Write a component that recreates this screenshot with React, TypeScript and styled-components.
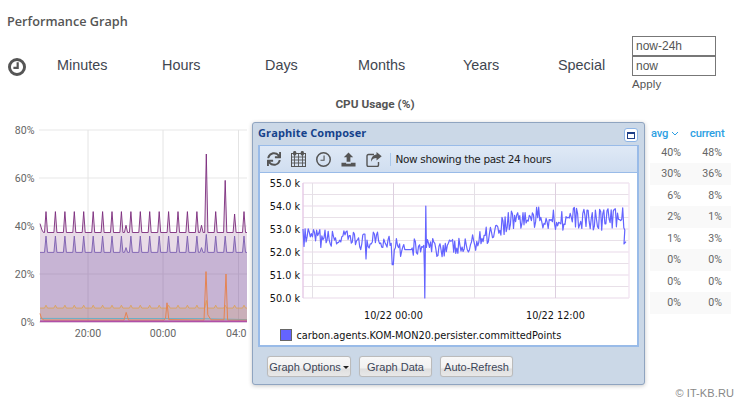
import React from "react";
import styled, { createGlobalStyle } from "styled-components";
import { FaSync } from "react-icons/fa";

const Global = createGlobalStyle`
  html, body { margin: 0; padding: 0; background: #fff; }
  body { width: 739px; height: 400px; overflow: hidden; font-family: "Liberation Sans", Arial, sans-serif; }
`;

const Page = styled.div`
  position: relative;
  width: 739px;
  height: 400px;
  overflow: hidden;
  padding: 13px 0 0 7px;
  box-sizing: border-box;
`;
const Title = styled.h2`
  margin: 0;
  font: 600 12.7px/17px "Open Sans", sans-serif;
  color: #555;
`;
const RangeBar = styled.div`
  display: flex;
  align-items: center;
  height: 57px;
  margin-top: 6px;
`;
const ClockSlot = styled.div`
  width: 50px;
  padding-top: 4px;
  display: flex;
  padding-left: 1px;
  box-sizing: border-box;
`;
const Tab = styled.div<{ $w: number }>`
  width: ${(p) => p.$w}px;
  font: 14.4px/20px "Liberation Sans", sans-serif;
  color: #3f4650;
`;
const RangeForm = styled.div`
  display: flex;
  flex-direction: column;
  align-self: flex-start;
  width: 84px;
`;
const RangeInput = styled.div`
  height: 18px;
  border: 1px solid #777;
  padding-left: 3px;
  font: 12px/18px "Liberation Sans", sans-serif;
  color: #555;
`;
const ApplyLabel = styled.div`
  font: 11.5px/14px "Liberation Sans", sans-serif;
  letter-spacing: 0.1px;
  color: #555;
  margin-top: 1px;
`;
const ChartTitle = styled.div`
  width: 739px;
  margin: 4px 0 0 -7px;
  padding-left: 11px;
  box-sizing: border-box;
  text-align: center;
  font: 700 11.8px/15px "Roboto", sans-serif;
  color: #555;
`;
const ChartRow = styled.div`
  display: flex;
  margin: 8px 0 0 -7px;
`;
const LegendTable = styled.div`
  margin: 5px 0 0 401px;
  width: 81px;
  flex: none;
`;
const LegendHead = styled.div`
  display: flex;
  height: 17px;
  font: 500 11.2px/17px "Roboto", sans-serif;
  letter-spacing: -0.2px;
  color: #2d9fe3;
  padding-left: 1px;
`;
const HeadAvg = styled.div`
  width: 39px;
  display: flex;
  align-items: center;
  gap: 3px;
`;
const LegendRow = styled.div<{ $alt: boolean }>`
  display: grid;
  grid-template-columns: 31px 41px;
  height: 21.45px;
  background: ${(p) => (p.$alt ? "#f9f9f9" : "#fff")};
  font: 10.6px/21px "Roboto", sans-serif;
  color: #666;
  text-align: right;
`;

const Win = styled.div`
  position: absolute;
  left: 252px;
  top: 122px;
  width: 393px;
  height: 263px;
  box-sizing: border-box;
  background: #cbd8e7;
  border: 1px solid #8fa4c0;
  border-radius: 3px;
  box-shadow: 0 1px 4px rgba(0, 0, 0, 0.22);
  padding: 0 5px;
`;
const WinHead = styled.div`
  display: flex;
  align-items: center;
  justify-content: space-between;
  height: 22px;
`;
const WinTitle = styled.div`
  font: 700 11px/14px "Open Sans", sans-serif;
  color: #15428b;
  letter-spacing: 0.1px;
  margin-bottom: 2px;
`;
const MaxBtn = styled.div`
  width: 12px;
  height: 12px;
  margin: 2px 1px 0 0;
  background: #fff;
  border: 1px solid #8eb5e6;
  border-radius: 3px;
  display: flex;
  align-items: center;
  justify-content: center;
  &::before {
    content: "";
    width: 6px;
    height: 4px;
    border: 1px solid #1f3f87;
    border-top-width: 2px;
  }
`;
const Body = styled.div`
  border: 1px solid #99bbe8;
  border-width: 1px 2px 2px;
`;
const Toolbar = styled.div`
  display: flex;
  align-items: center;
  height: 26px;
  padding-left: 5.5px;
  background: linear-gradient(#dfe9f6, #d0def0);
  border-bottom: 1px solid #99bbe8;
`;
const IconGroup = styled.div`
  display: flex;
  align-items: center;
  gap: 9px;
`;
const IconSlot = styled.div`
  display: flex;
  width: 16px;
  justify-content: center;
  color: #555;
`;
const Sep = styled.div`
  width: 1px;
  height: 13px;
  margin-left: 8px;
  background: #aac8ea;
`;
const ToolText = styled.div`
  margin-left: 5px;
  font: 10.5px/14px "DejaVu Sans", sans-serif;
  color: #222;
  letter-spacing: -0.35px;
`;
const GraphBox = styled.div`
  background: #fff;
  height: 172px;
`;
const BtnRow = styled.div`
  display: flex;
  gap: 8px;
  padding: 9px 0 0 9px;
`;
const Btn = styled.div<{ $w: number }>`
  width: ${(p) => p.$w}px;
  height: 21px;
  box-sizing: border-box;
  border: 1px solid #bbb;
  border-radius: 3px;
  background: linear-gradient(#f8f8f8 0, #f1f1f1 60%, #dedede 61%, #e8e8e8 100%);
  font: 11px/18px "Liberation Sans", sans-serif;
  white-space: nowrap;
  color: #3c4658;
  display: flex;
  align-items: center;
  justify-content: center;
  gap: 2px;
  box-shadow: 0 0 1px rgba(0, 0, 0, 0.1);
`;
const Caret = styled.span`
  border: 3px solid transparent;
  border-top: 3px solid #222;
  border-bottom: 0;
  margin-top: 1px;
`;
const Watermark = styled.div`
  position: absolute;
  right: 5px;
  bottom: 0;
  font: 11px/14px "Liberation Sans", sans-serif;
  letter-spacing: 0.1px;
  color: #888;
`;

function rng(seed: number) {
  let s = seed;
  return () => {
    s = (s * 16807) % 2147483647;
    return (s - 1) / 2147483646;
  };
}

/* main chart */
const yP = (v: number) => 322 - v * 2.4;
const X0 = 40;
const X1 = 247;
function spikeSeries(base: number, peak: number, start?: number, over: Record<number, number> = {}, bump = 0) {
  const pts: [number, number][] = [];
  if (start !== undefined) pts.push([X0, start], [X0 + 2, base + 1], [X0 + 3.5, base]);
  else pts.push([X0, base]);
  for (let i = 0; i < 22; i++) {
    const c = 46 + i * 9.43;
    if (c > X1) break;
    const pk = over[i] ?? peak;
    const hw = pk - base > 15 ? 1.6 : 1.5;
    pts.push([c - hw, base], [c, pk], [c + hw, base]);
    if (bump && (i === 8 || i === 16)) pts.push([c + 3, base], [c + 4.6, base + bump], [c + 6.2, base]);
  }
  pts.push([X1, base]);
  return pts;
}
const toLine = (pts: [number, number][]) => pts.map((p, i) => `${i ? "L" : "M"}${p[0].toFixed(1)} ${yP(p[1]).toFixed(1)}`).join(" ");
const toArea = (pts: [number, number][]) => `${toLine(pts)} L${X1} ${yP(0)} L${X0} ${yP(0)} Z`;

const s1 = spikeSeries(37.3, 46, 41, { 17: 70, 19: 59, 20: 45 }, 3);
const s2 = spikeSeries(29, 35.8, undefined, { 17: 36.5 }, 2);
const s3 = spikeSeries(5.8, 7, undefined, { 17: 9 });
const s4: [number, number][] = [
  [40, 3.6], [41.5, 1.5], [44, 0.8], [124, 0.8], [126.2, 4], [128.5, 0.8], [164, 0.8], [165.5, 1.4],
  [167, 8], [168.8, 1], [204, 0.8], [206, 21], [207.8, 3], [211, 0.9], [224, 0.9],
  [226, 20], [227.6, 0.8], [247, 0.8],
];
const s5: [number, number][] = [[40, 1.5], [200, 1.4], [247, 1]];

const AXIS = { fontFamily: "Roboto, sans-serif", fontSize: 10.6, fill: "#666" };

function MainChart() {
  return (
    <svg width="249" height="226" viewBox="0 120 249 226" style={{ flex: "none", display: "block" }}>
      {[0, 20, 40, 60, 80].map((v) => (
        <g key={v}>
          <line x1={X0 - 1} x2={X1} y1={yP(v)} y2={yP(v)} stroke="#efefef" strokeWidth="1.4" />
          <text x="34.5" y={yP(v) + 3.8} textAnchor="end" {...AXIS}>{v}%</text>
        </g>
      ))}
      {[88, 163, 238.5].map((x) => (
        <line key={x} x1={x} x2={x} y1={yP(80)} y2={yP(0)} stroke="#e4e4e4" strokeWidth="1" />
      ))}
      <path d={toArea(s1)} fill="#8a4a88" fillOpacity="0.2" />
      <path d={toArea(s2)} fill="#7a5aa8" fillOpacity="0.3" />
      <path d={toArea(s3)} fill="#d89a50" fillOpacity="0.2" />
      <path d={toLine(s1)} fill="none" stroke="#7b2a7c" strokeWidth="0.9" />
      <path d={toLine(s2)} fill="none" stroke="#7a5cb0" strokeWidth="0.9" />
      <path d={toLine(s3)} fill="none" stroke="#dba35c" strokeWidth="0.9" />
      <path d={toLine(s5)} fill="none" stroke="#6ab0c8" strokeWidth="1" />
      <path d={toLine(s4)} fill="none" stroke="#e58452" strokeWidth="1" />
      <line x1={X0} x2={X1} y1={321.4} y2={321.4} stroke="#b04fa8" strokeWidth="1.6" />
      <text x="88" y="337" textAnchor="middle" {...AXIS}>20:00</text>
      <text x="163" y="337" textAnchor="middle" {...AXIS}>00:00</text>
      <text x="226" y="337" {...AXIS}>04:0</text>
    </svg>
  );
}

/* composer graph: coords relative to the white box, whose left is 260 and top is 173 */
const GX0 = 43;
const GX1 = 369;
const gy = (v: number) => 10 + (55 - v) * 23;
function composerPath() {
  const r = rng(4242);
  let x = GX0;
  let d = `M${x} ${gy(53).toFixed(1)}`;
  while (x < 364) {
    x += 1.05;
    const t = x + 260;
    let base = 52.45;
    if (t < 400) base = 52.62 - ((t - 303) / 97) * 0.2;
    else if (t >= 470 && t < 512) base = 52.3 + ((t - 470) / 42) * 1.15;
    else if (t >= 512) base = 53.45;
    else if (t >= 400) base = 52.2;
    const amp = t > 500 ? 1.0 : 0.8;
    let v = base + (r() - 0.5) * amp;
    if (t > 365 && t < 367) v = 51.7;
    if (t > 392 && t < 394) v = 51.45;
    if (t > 404 && t < 412) v = 52.1;
    d += ` L${x.toFixed(1)} ${gy(v).toFixed(1)}`;
    if (Math.abs(t - 423.5) < 0.55) {
      d += ` L${(x + 0.6).toFixed(1)} ${gy(51.3).toFixed(1)} L${(x + 1).toFixed(1)} ${gy(50).toFixed(1)} L${(x + 1.5).toFixed(1)} ${gy(52).toFixed(1)} L${(x + 2).toFixed(1)} ${gy(54).toFixed(1)} L${(x + 2.6).toFixed(1)} ${gy(52.2).toFixed(1)}`;
      x += 2.6;
    }
  }
  d += ` L${GX1 - 5} ${gy(52.35)} L${GX1 - 3} ${gy(52.45)}`;
  return d;
}
const composerD = composerPath();

function ComposerGraph() {
  const labels = [55, 54, 53, 52, 51, 50];
  const minor = [54.5, 53.5, 52.5, 51.5, 50.5];
  return (
    <svg width="377" height="172" style={{ display: "block" }}>
      {minor.map((v) => (
        <line key={v} x1={GX0} x2={GX1} y1={gy(v)} y2={gy(v)} stroke="#e8e0e8" strokeWidth="1" />
      ))}
      {labels.map((v) => (
        <g key={v}>
          <line x1={GX0} x2={GX1} y1={gy(v)} y2={gy(v)} stroke="#f1e6f1" strokeWidth="1.5" />
          <text x="40" y={gy(v) + 3.5} textAnchor="end" fontFamily="DejaVu Sans, sans-serif" fontSize="9.7" fill="#111">{v.toFixed(1)} k</text>
        </g>
      ))}
      <line x1={52.5} x2={52.5} y1={gy(55)} y2={gy(50)} stroke="#e4e0e6" />
      <line x1={133.5} x2={133.5} y1={gy(55)} y2={gy(50)} stroke="#ddcfdf" />
      <line x1={214.5} x2={214.5} y1={gy(55)} y2={gy(50)} stroke="#e4e0e6" />
      <line x1={295.5} x2={295.5} y1={gy(55)} y2={gy(50)} stroke="#ddcfdf" />
      <line x1={GX0} x2={GX0} y1={gy(55)} y2={gy(50)} stroke="#e6c9e6" strokeWidth="1.4" />
      <line x1={GX1} x2={GX1} y1={gy(55)} y2={gy(50)} stroke="#f3e6f3" strokeWidth="1.4" />
      <path d={composerD} fill="none" stroke="#6464ff" strokeWidth="1.2" strokeLinejoin="round" />
      <text x="133.5" y="146" textAnchor="middle" fontFamily="DejaVu Sans, sans-serif" fontSize="9.7" fill="#111">10/22 00:00</text>
      <text x="295.5" y="146" textAnchor="middle" fontFamily="DejaVu Sans, sans-serif" fontSize="9.7" fill="#111">10/22 12:00</text>
      <rect x="20.5" y="156.5" width="11" height="11" fill="#6464ff" stroke="#666" />
      <text x="36.5" y="166" fontFamily="DejaVu Sans, sans-serif" fontSize="9.75" fill="#111">carbon.agents.KOM-MON20.persister.committedPoints</text>
    </svg>
  );
}

const C = "#555";
function CalIcon() {
  return (
    <svg width="15" height="16" viewBox="0 0 15 16">
      <rect x="0.5" y="2.5" width="14" height="13" fill="none" stroke={C} />
      <path d="M0 6H15M0 9H15M0 12H15M3.5 3V16M7.5 3V16M11.5 3V16" stroke={C} strokeWidth="0.9" />
      <rect x="2.2" y="0" width="3" height="4.5" rx="1.3" fill={C} />
      <rect x="9.8" y="0" width="3" height="4.5" rx="1.3" fill={C} />
    </svg>
  );
}
function ClockIcon({ size, sw }: { size: number; sw: number }) {
  const r = 8 - sw / 2;
  return (
    <svg width={size} height={size} viewBox="0 0 16 16">
      <circle cx="8" cy="8" r={r} fill="none" stroke={C} strokeWidth={sw} />
      <path d="M8.6 3.8V8.8H4.8" fill="none" stroke={C} strokeWidth={sw * 0.75} />
    </svg>
  );
}
function UploadIcon() {
  return (
    <svg width="15" height="15" viewBox="0 0 16 15">
      <path d="M8 0L13 5.2H10V10H6V5.2H3Z" fill={C} />
      <path d="M0.5 11H5.5V12H10.5V11H15.5V15H0.5Z" fill={C} />
    </svg>
  );
}
function ShareIcon() {
  return (
    <svg width="16" height="15" viewBox="0 0 16 15">
      <path d="M8 2.5H2.5C1.5 2.5 1 3 1 4V13C1 14 1.5 14.5 2.5 14.5H11C12 14.5 12.5 14 12.5 13V10" fill="none" stroke={C} strokeWidth="1.4" />
      <path d="M10.5 0L15.7 4.2L10.5 8.4V5.9C8 5.9 6.2 6.8 5 9.8C5 5.6 7 3 10.5 2.6Z" fill={C} />
    </svg>
  );
}

const rows: [string, string][] = [
  ["40%", "48%"], ["30%", "36%"], ["6%", "8%"], ["2%", "1%"],
  ["1%", "3%"], ["0%", "0%"], ["0%", "0%"], ["0%", "0%"],
];

export default function App() {
  return (
    <Page>
      <Global />
      <Title>Performance Graph</Title>
      <RangeBar>
        <ClockSlot><ClockIcon size={18} sw={2.6} /></ClockSlot>
        <Tab $w={105}>Minutes</Tab>
        <Tab $w={103}>Hours</Tab>
        <Tab $w={93}>Days</Tab>
        <Tab $w={105}>Months</Tab>
        <Tab $w={95}>Years</Tab>
        <Tab $w={74}>Special</Tab>
        <RangeForm>
          <RangeInput>now-24h</RangeInput>
          <RangeInput>now</RangeInput>
          <ApplyLabel>Apply</ApplyLabel>
        </RangeForm>
      </RangeBar>
      <ChartTitle>CPU Usage (%)</ChartTitle>
      <ChartRow>
        <MainChart />
        <LegendTable>
          <LegendHead>
            <HeadAvg>
              avg
              <svg width="8" height="5" viewBox="0 0 8 5"><path d="M1 1L4 4L7 1" fill="none" stroke="#2d9fe3" strokeWidth="1" /></svg>
            </HeadAvg>
            current
          </LegendHead>
          {rows.map((r, i) => (
            <LegendRow key={i} $alt={i % 2 === 1}>
              <span>{r[0]}</span>
              <span>{r[1]}</span>
            </LegendRow>
          ))}
        </LegendTable>
      </ChartRow>
      <Win>
        <WinHead>
          <WinTitle>Graphite Composer</WinTitle>
          <MaxBtn />
        </WinHead>
        <Body>
          <Toolbar>
            <IconGroup>
              <IconSlot><FaSync size={14} /></IconSlot>
              <IconSlot><CalIcon /></IconSlot>
              <IconSlot><ClockIcon size={15} sw={1.6} /></IconSlot>
              <IconSlot><UploadIcon /></IconSlot>
              <IconSlot><ShareIcon /></IconSlot>
            </IconGroup>
            <Sep />
            <ToolText>Now showing the past 24 hours</ToolText>
          </Toolbar>
          <GraphBox><ComposerGraph /></GraphBox>
        </Body>
        <BtnRow>
          <Btn $w={84}>Graph Options<Caret /></Btn>
          <Btn $w={73}>Graph Data</Btn>
          <Btn $w={73}>Auto-Refresh</Btn>
        </BtnRow>
      </Win>
      <Watermark>© IT-KB.RU</Watermark>
    </Page>
  );
}
